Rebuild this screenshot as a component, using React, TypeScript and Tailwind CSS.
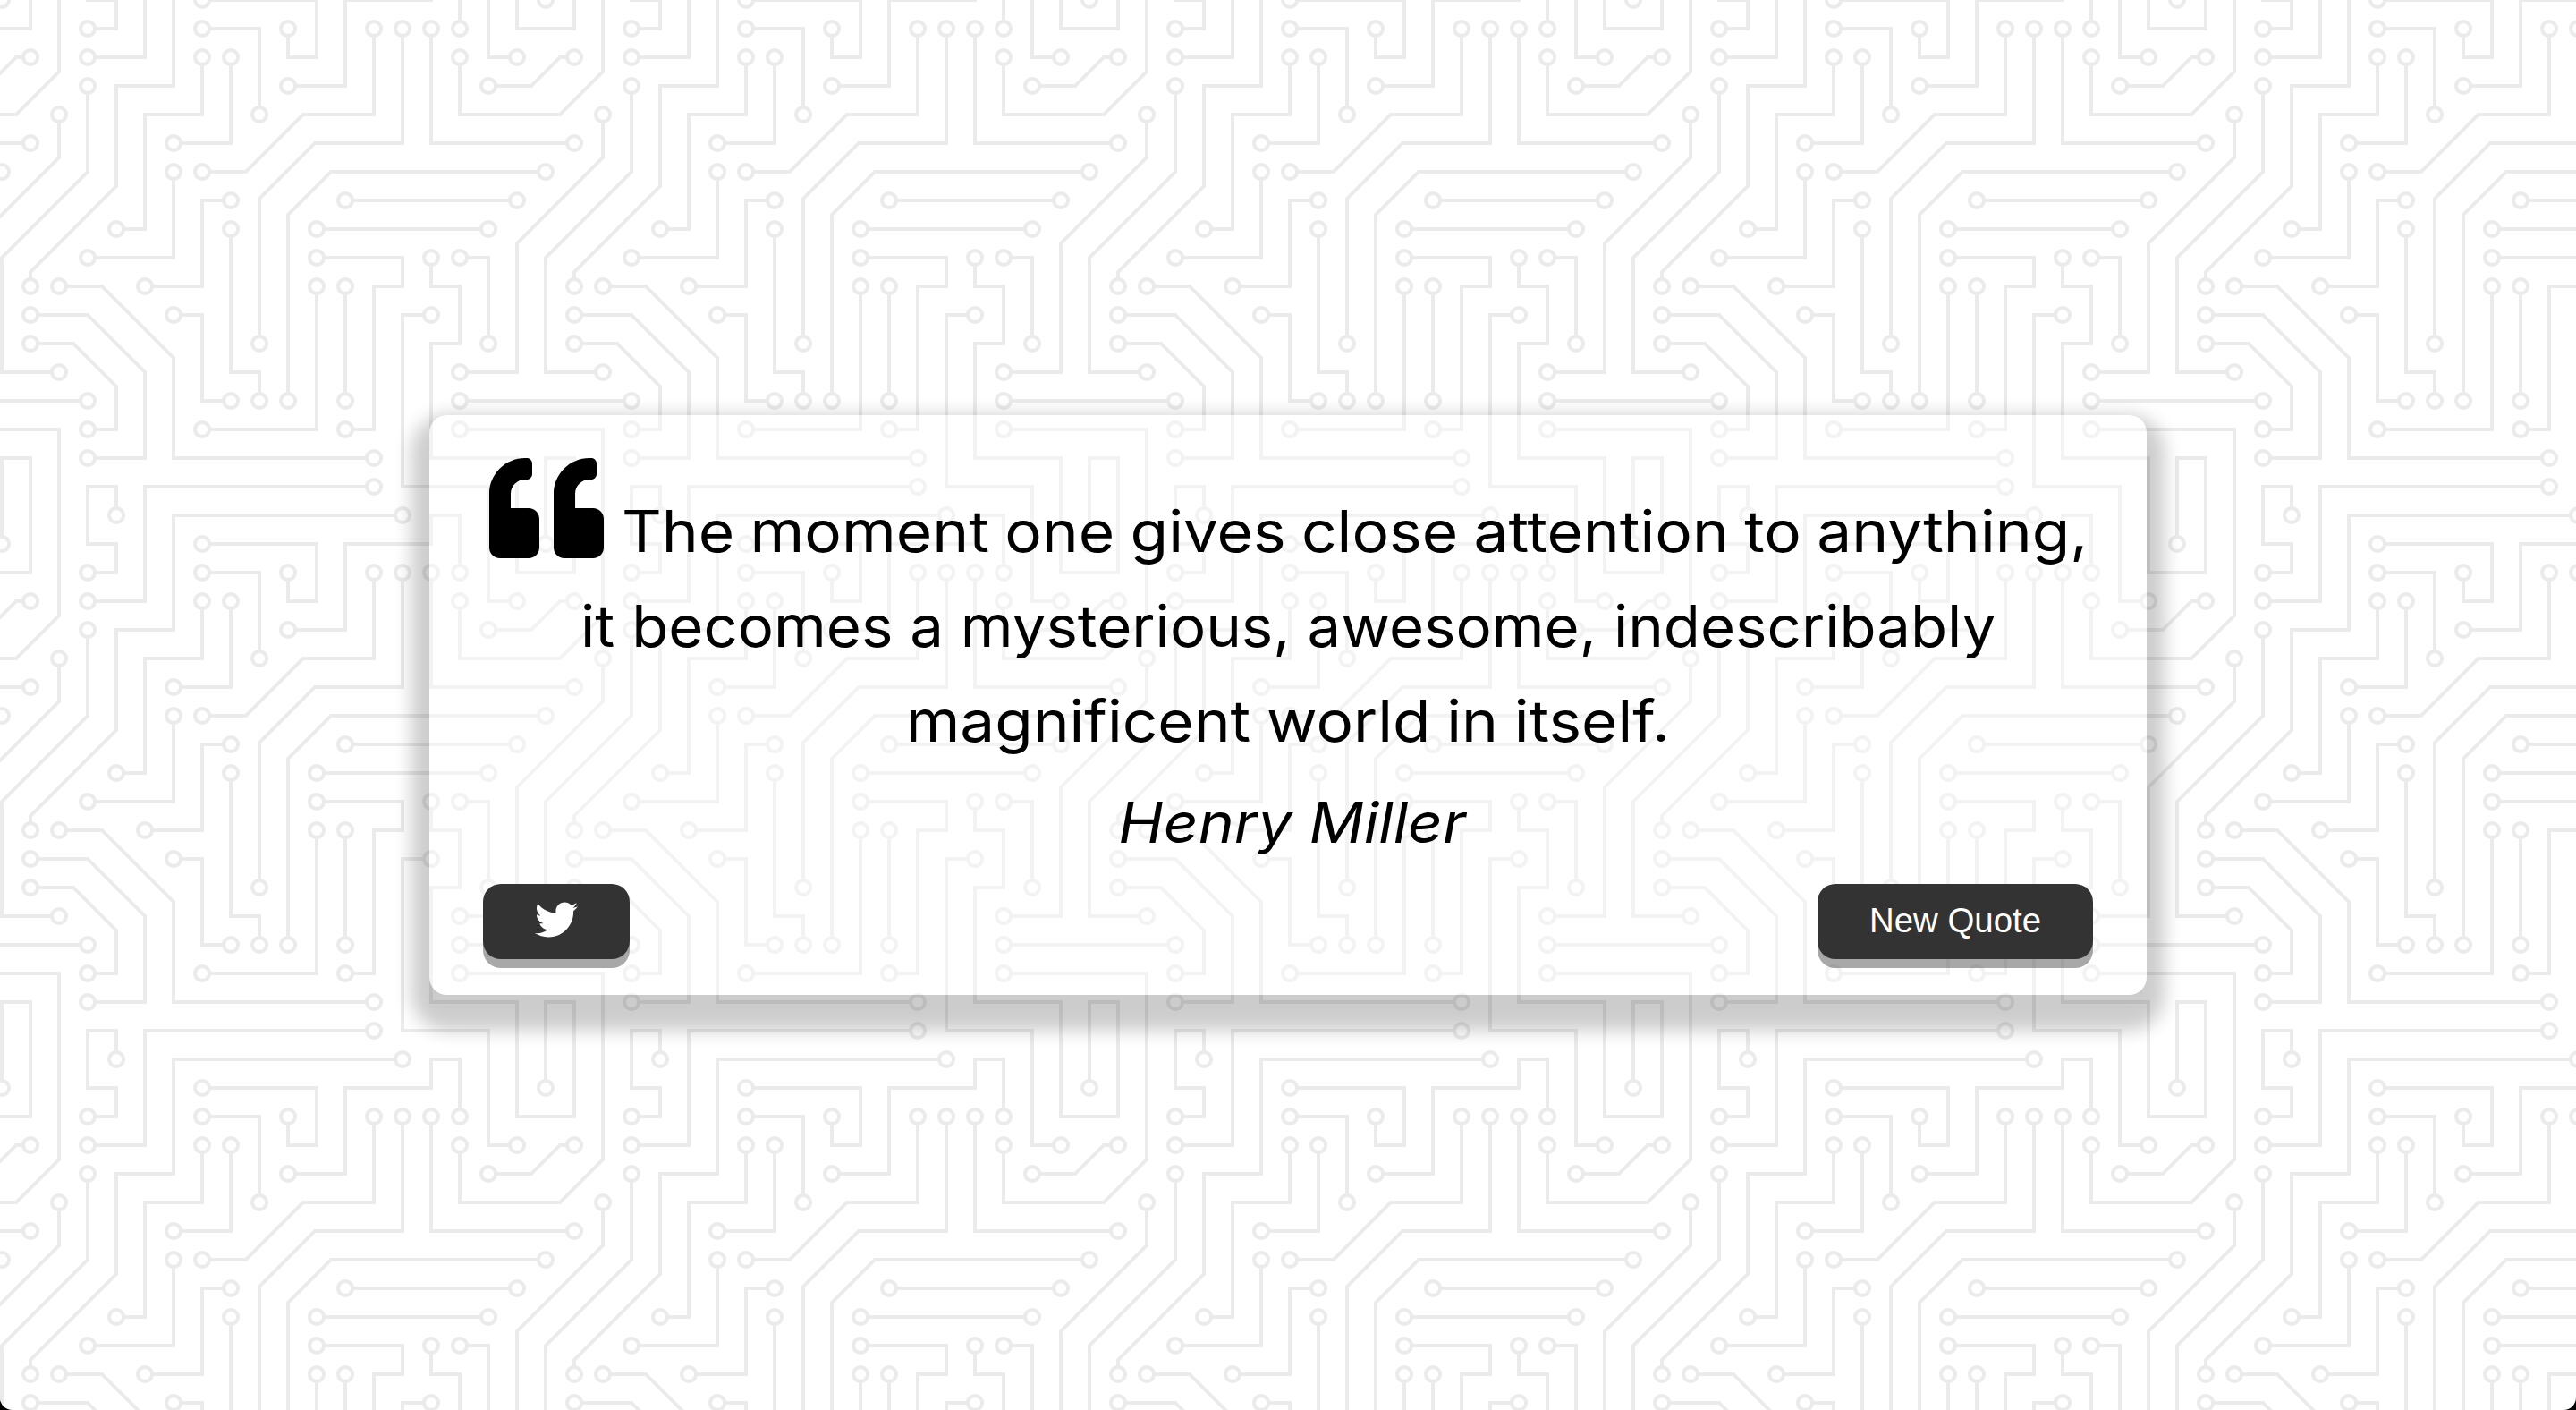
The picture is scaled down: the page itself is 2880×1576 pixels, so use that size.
import React from "react";
import { FaQuoteLeft, FaTwitter } from "react-icons/fa";

const TRACES =
  "M44.1 224a5 5 0 1 1 0 2H0v-2h44.1zm160 48a5 5 0 1 1 0 2H82v-2h122.1zm57.8-46a5 5 0 1 1 0-2H304v2h-42.1zm0 16a5 5 0 1 1 0-2H304v2h-42.1zm6.2-114a5 5 0 1 1 0 2h-86.2a5 5 0 1 1 0-2h86.2zm-256-48a5 5 0 1 1 0 2H0v-2h12.1zm185.8 34a5 5 0 1 1 0-2h86.2a5 5 0 1 1 0 2h-86.2zM258 12.1a5 5 0 1 1-2 0V0h2v12.1zm-64 208a5 5 0 1 1-2 0v-54.2a5 5 0 1 1 2 0v54.2zm48-198.2V80h62v2h-64V21.9a5 5 0 1 1 2 0zm16 16V64h46v2h-48V37.9a5 5 0 1 1 2 0zm-128 96V208h16v12.1a5 5 0 1 1-2 0V210h-16v-76.1a5 5 0 1 1 2 0zm-5.9-21.9a5 5 0 1 1 0 2H114v48H85.9a5 5 0 1 1 0-2H112v-48h12.1zm-6.2 130a5 5 0 1 1 0-2H176v-74.1a5 5 0 1 1 2 0V242h-60.1zm-16-64a5 5 0 1 1 0-2H114v48h10.1a5 5 0 1 1 0 2H112v-48h-10.1zM66 284.1a5 5 0 1 1-2 0V274H50v30h-2v-32h18v12.1zM236.1 176a5 5 0 1 1 0 2H226v94h48v32h-2v-30h-48v-98h12.1zm25.8-30a5 5 0 1 1 0-2H274v44.1a5 5 0 1 1-2 0V146h-10.1zm-64 96a5 5 0 1 1 0-2H208v-80h16v-14h-42.1a5 5 0 1 1 0-2H226v18h-16v80h-12.1zm86.2-210a5 5 0 1 1 0 2H272V0h2v32h10.1zM98 101.9V146H53.9a5 5 0 1 1 0-2H96v-42.1a5 5 0 1 1 2 0zM53.9 34a5 5 0 1 1 0-2H80V0h2v34H53.9zm60.1 3.9V66H82v64H69.9a5 5 0 1 1 0-2H80V64h32V37.9a5 5 0 1 1 2 0zM101.9 82a5 5 0 1 1 0-2H128V37.9a5 5 0 1 1 2 0V82h-28.1zm16-64a5 5 0 1 1 0-2H146v44.1a5 5 0 1 1-2 0V18h-26.1zm102.2 270a5 5 0 1 1 0 2H98v14h-2v-16h124.1zM242 149.9V160h16v34h-16v62h48v48h-2v-46h-48v-66h16v-30h-16v-12.1a5 5 0 1 1 2 0zM53.9 18a5 5 0 1 1 0-2H64V2H48V0h18v18H53.9zm112 32a5 5 0 1 1 0-2H192V0h50v2h-48v48h-28.1zm-48-48a5 5 0 0 1-9.8-2h2.07a3 3 0 1 0 5.66 0H178v34h-18V21.9a5 5 0 1 1 2 0V32h14V2h-58.1zm0 96a5 5 0 1 1 0-2H137l32-32h39V21.9a5 5 0 1 1 2 0V66h-40.17l-32 32H117.9zm28.1 90.1a5 5 0 1 1-2 0v-76.51L175.59 80H224V21.9a5 5 0 1 1 2 0V82h-49.59L146 112.41v75.69zm16 32a5 5 0 1 1-2 0v-99.51L184.59 96H300.1a5 5 0 0 1 3.9-3.9v2.07a3 3 0 0 0 0 5.66v2.07a5 5 0 0 1-3.9-3.9H185.41L162 121.41v98.69zm-144-64a5 5 0 1 1-2 0v-3.51l48-48V48h32V0h2v50H66v55.41l-48 48v2.69zM50 53.9v43.51l-48 48V208h26.1a5 5 0 1 1 0 2H0v-65.41l48-48V53.9a5 5 0 1 1 2 0zm-16 16V89.41l-34 34v-2.82l32-32V69.9a5 5 0 1 1 2 0zM12.1 32a5 5 0 1 1 0 2H9.41L0 43.41V40.6L8.59 32h3.51zm265.8 18a5 5 0 1 1 0-2h18.69l7.41-7.41v2.82L297.41 50H277.9zm-16 160a5 5 0 1 1 0-2H288v-71.41l16-16v2.82l-14 14V210h-28.1zm-208 32a5 5 0 1 1 0-2H64v-22.59L40.59 194H21.9a5 5 0 1 1 0-2H41.41L66 216.59V242H53.9zm150.2 14a5 5 0 1 1 0 2H96v-56.6L56.6 162H37.9a5 5 0 1 1 0-2h19.5L98 200.6V256h106.1zm-150.2 2a5 5 0 1 1 0-2H80v-46.59L48.59 178H21.9a5 5 0 1 1 0-2H49.41L82 208.59V258H53.9zM34 39.8v1.61L9.41 66H0v-2h8.59L32 40.59V0h2v39.8zM2 300.1a5 5 0 0 1 3.9 3.9H3.83A3 3 0 0 0 0 302.17V256h18v48h-2v-46H2v42.1zM34 241v63h-2v-62H0v-2h34v1zM17 18H0v-2h16V0h2v18h-1zm273-2h14v2h-16V0h2v16zm-32 273v15h-2v-14h-14v14h-2v-16h18v1zM0 92.1A5.02 5.02 0 0 1 6 97a5 5 0 0 1-6 4.9v-2.07a3 3 0 1 0 0-5.66V92.1zM80 272h2v32h-2v-32zm37.9 32h-2.07a3 3 0 0 0-5.66 0h-2.07a5 5 0 0 1 9.8 0zM5.9 0A5.02 5.02 0 0 1 0 5.9V3.83A3 3 0 0 0 3.83 0H5.9zm294.2 0h2.07A3 3 0 0 0 304 3.83V5.9a5 5 0 0 1-3.9-5.9zm3.9 300.1v2.07a3 3 0 0 0-1.83 1.83h-2.07a5 5 0 0 1 3.9-3.9z";

// Centres of the hollow solder pads inside one tile.
const PADS: [number, number][] = [
  [49, 225], [209, 273], [257, 225], [257, 241], [273, 129], [177, 129], [17, 81], [193, 113],
  [289, 113], [257, 17], [193, 225], [193, 161], [241, 17], [257, 33], [129, 129], [145, 225],
  [129, 113], [81, 161], [113, 241], [177, 161], [97, 177], [129, 225], [65, 289], [241, 177],
  [257, 145], [273, 193], [193, 241], [177, 145], [289, 33], [49, 145], [97, 97], [49, 33],
  [113, 33], [65, 129], [97, 81], [129, 33], [113, 17], [145, 65], [225, 289], [241, 145],
  [49, 17], [161, 49], [161, 17], [113, 97], [209, 17], [145, 193], [225, 17], [161, 225],
  [17, 161], [49, 49], [33, 209], [33, 65], [17, 33], [273, 49], [257, 209], [49, 241],
  [17, 193], [209, 257], [33, 161], [49, 257], [17, 177],
];

function CircuitBackground() {
  return (
    <svg className="absolute inset-0 h-full w-full" aria-hidden="true">
      <defs>
        <pattern
          id="circuit"
          width="304"
          height="304"
          patternUnits="userSpaceOnUse"
          patternTransform="translate(0 -2) scale(2)"
        >
          <path d={TRACES} fill="#ebebeb" />
          {PADS.map(([x, y]) => (
            <circle key={`${x}-${y}`} cx={x} cy={y} r="3" fill="#fff" />
          ))}
        </pattern>
      </defs>
      <rect width="100%" height="100%" fill="url(#circuit)" />
    </svg>
  );
}

const BUTTON =
  "flex h-[84px] items-center justify-center rounded-[20px] bg-[#333] text-white shadow-[0_10px_0_rgba(0,0,0,0.34)]";

export default function App() {
  return (
    <div className="h-[1576px] w-[2880px] overflow-hidden bg-black">
      <main className="relative flex h-full w-full items-center justify-center overflow-hidden rounded-b-[14px] bg-white">
        <CircuitBackground />
        <section className="relative flex h-[648px] w-[1920px] flex-col rounded-[20px] bg-white/40 px-[60px] pt-[40px] shadow-[0_20px_20px_20px_rgba(0,0,0,0.2)]">
          <blockquote className="flex flex-col items-center whitespace-nowrap font-['Inter',sans-serif] text-[64px] leading-[106px] text-black">
            <div className="flex h-[143px] w-full items-start">
              <FaQuoteLeft className="ml-[7px] size-[128px] shrink-0" />
              <span className="ml-[20px] origin-left scale-x-[1.084] self-end [word-spacing:-2px]">
                The moment one gives close attention to anything,
              </span>
            </div>
            <span className="scale-x-[1.049]">it becomes a mysterious, awesome, indescribably</span>
            <span className="scale-x-[1.082] [word-spacing:-1.5px]">magnificent world in itself.</span>
            <cite className="mt-[7px] ml-[9px] scale-x-[1.076] text-[63px]">Henry Miller</cite>
          </blockquote>
          <div className="mt-[16px] flex justify-between">
            <button className={`${BUTTON} w-[164px]`} aria-label="Tweet">
              <FaTwitter className="-mt-[4px] size-[48px]" />
            </button>
            <button className={`${BUTTON} w-[308px] font-['Liberation_Sans',sans-serif] text-[38.4px]`}>
              <span className="-mt-[2px]">New Quote</span>
            </button>
          </div>
        </section>
      </main>
    </div>
  );
}
